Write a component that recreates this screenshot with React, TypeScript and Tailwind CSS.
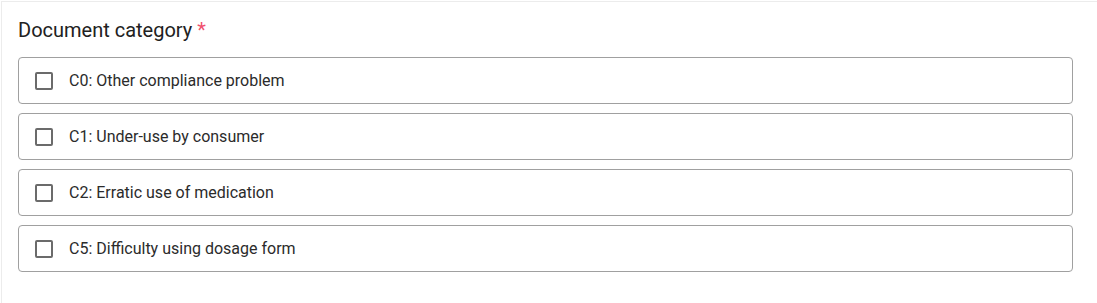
const options = [
  "C0: Other compliance problem",
  "C1: Under-use by consumer",
  "C2: Erratic use of medication",
  "C5: Difficulty using dosage form",
];

const App = () => {
  return (
    <div className="min-h-screen bg-white pl-px pt-px font-['Roboto',sans-serif]">
      <div className="border-l border-t border-[#ececec] pl-4 pr-6 pt-[14px] pb-8">
        <h2 className="text-[20px] leading-[28px] text-[#212121] mb-[13px]">
          Document category <span className="text-[#f0506e]">*</span>
        </h2>
        <div className="flex flex-col gap-[9px]">
          {options.map((label, idx) => (
            <label
              key={idx}
              className="flex items-center h-[47px] border border-[#a0a0a0] rounded-[4px] pl-4 cursor-pointer"
            >
              <span className="w-[18px] h-[18px] border-2 border-[#6b6b6b] rounded-[2px] shrink-0" />
              <span className="ml-4 text-[16px] text-[#2b2b2b]">{label}</span>
            </label>
          ))}
        </div>
      </div>
    </div>
  );
};

export default App;
